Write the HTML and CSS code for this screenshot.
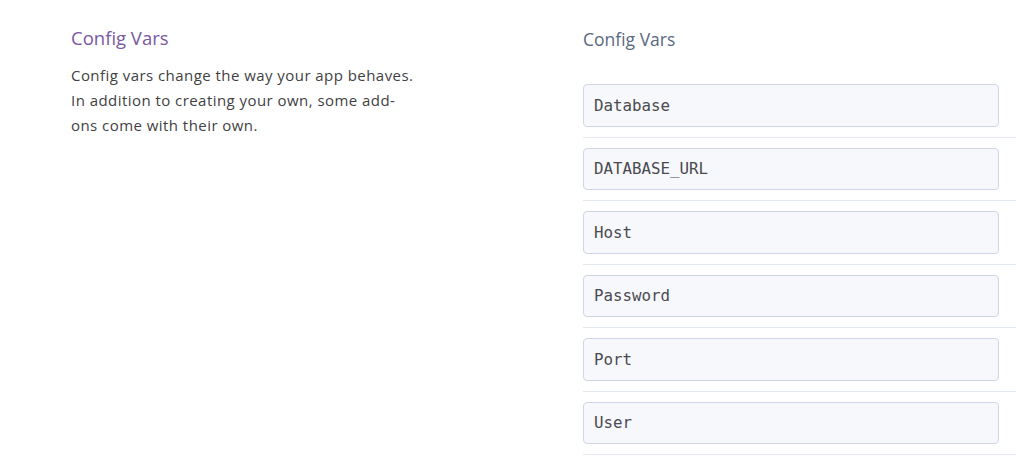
FILE: index.html
```html
<!DOCTYPE html>
<html>
<head>
<meta charset="utf-8">
<link rel="stylesheet" href="styles.css">
</head>
<body>
<div class="page">
  <section class="intro">
    <h2 class="intro-title">Config Vars</h2>
    <p class="intro-text">Config vars change the way your app behaves. In addition to creating your own, some add-ons come with their own.</p>
  </section>
  <section class="vars">
    <h3 class="vars-title">Config Vars</h3>
    <ul class="var-list">
      <li class="var-row"><div class="var-input">Database</div></li>
      <li class="var-row"><div class="var-input">DATABASE_URL</div></li>
      <li class="var-row"><div class="var-input">Host</div></li>
      <li class="var-row"><div class="var-input">Password</div></li>
      <li class="var-row"><div class="var-input">Port</div></li>
      <li class="var-row"><div class="var-input">User</div></li>
    </ul>
  </section>
</div>
</body>
</html>
```
FILE: styles.css
```css
html, body {
  margin: 0;
  padding: 0;
  background: #ffffff;
  overflow: hidden;
}
.page {
  display: flex;
  padding-left: 71px;
  font-family: "Open Sans", Lato, sans-serif;
}
.intro {
  width: 346px;
  flex: none;
}
.intro-title {
  margin: 26px 0 0;
  font-size: 18.5px;
  font-weight: 400;
  line-height: 24px;
  color: #79589f;
}
.intro-text {
  margin: 13px 0 0;
  font-size: 15px;
  letter-spacing: 0.45px;
  line-height: 25px;
  color: #3f3f44;
}
.vars {
  margin-left: 166px;
  flex: 1;
}
.vars-title {
  margin: 27px 0 0;
  font-size: 17.5px;
  font-weight: 400;
  line-height: 24px;
  color: #596981;
}
.var-list {
  list-style: none;
  margin: 33px 0 0;
  padding: 0;
  width: 460px;
}
.var-row {
  padding: 10px 0;
  border-bottom: 1px solid #e3e7f0;
}
.var-row:first-child {
  padding-top: 0;
}
.var-input {
  box-sizing: border-box;
  width: 416px;
  height: 42.5px;
  padding: 0 10px;
  display: flex;
  align-items: center;
  border: 1px solid #cfd7e6;
  border-radius: 4px;
  background: #f7f8fb;
  font-family: "DejaVu Sans Mono", monospace;
  font-size: 15.8px;
  color: #4a4a50;
}
```
